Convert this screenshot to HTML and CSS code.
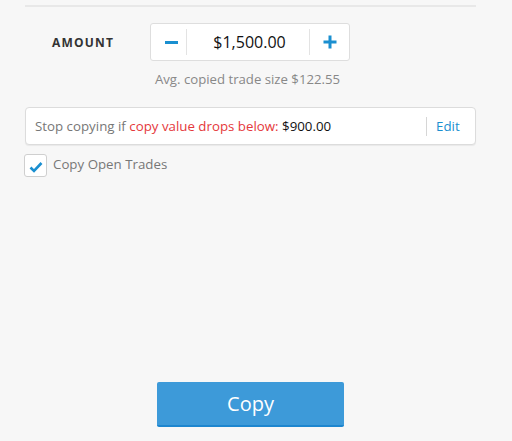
FILE: index.html
```html
<!DOCTYPE html>
<html>
<head>
<meta charset="utf-8">
<link rel="stylesheet" href="styles.css">
</head>
<body>
<div class="panel">
  <div class="divider"></div>
  <div class="amount-row">
    <div class="amount-label">AMOUNT</div>
    <div class="amount-col">
      <div class="stepper">
        <div class="step-btn minus"><span class="minus-bar"></span></div>
        <div class="step-value">$1,500.00</div>
        <div class="step-btn plus">
          <svg width="14" height="14" viewBox="0 0 14 14"><path d="M7 0.5V13.5M0.5 7H13.5" stroke="#1a8fd0" stroke-width="3"/></svg>
        </div>
      </div>
      <div class="avg">Avg. copied trade size $122.55</div>
    </div>
  </div>
  <div class="stop-box">
    <div class="stop-text"><span class="muted">Stop copying if </span><span class="red">copy value drops below: </span><span class="dark">$900.00</span></div>
    <div class="edit">Edit</div>
  </div>
  <label class="check-row">
    <span class="checkbox">
      <svg width="14" height="12" viewBox="0 0 14 12"><path d="M1.5 6.5L5 10L12.5 2" fill="none" stroke="#1a8fd0" stroke-width="2.6"/></svg>
    </span>
    <span class="check-text">Copy Open Trades</span>
  </label>
  <div class="btn-wrap">
    <button class="copy-btn">Copy</button>
  </div>
</div>
</body>
</html>
```
FILE: styles.css
```css
html, body {
  margin: 0;
  padding: 0;
  background: #f7f7f7;
  font-family: "Open Sans", "Liberation Sans", sans-serif;
}
.panel {
  width: 451px;
  margin-left: 25px;
}
.divider {
  height: 2px;
  margin-top: 5px;
  background: #e8e8e8;
}
.amount-row {
  display: flex;
  align-items: flex-start;
  margin-top: 16px;
}
.amount-label {
  width: 98px;
  padding-left: 27px;
  height: 37px;
  line-height: 40px;
  font-size: 12px;
  font-weight: 700;
  letter-spacing: 1.2px;
  color: #333;
}
.amount-col {
  width: 200px;
  display: flex;
  flex-direction: column;
  align-items: center;
}
.stepper {
  box-sizing: border-box;
  width: 200px;
  height: 38px;
  background: #fff;
  border: 1px solid #dedede;
  border-radius: 3px;
  display: flex;
  align-items: center;
}
.step-btn {
  height: 100%;
  display: flex;
  align-items: center;
}
.minus {
  width: 36px;
  justify-content: flex-start;
  padding-left: 14px;
  box-sizing: border-box;
  border-right: 1px solid #e3e3e3;
  height: 26px;
}
.minus-bar {
  width: 13px;
  height: 3px;
  background: #1a8fd0;
}
.step-value {
  flex: 1;
  text-align: center;
  font-size: 16px;
  color: #111;
  padding-left: 3px;
}
.plus {
  width: 39px;
  justify-content: center;
  border-left: 1px solid #e3e3e3;
  height: 26px;
}
.avg {
  margin-top: 10px;
  padding-right: 5px;
  font-size: 13.2px;
  line-height: 16px;
  color: #888;
  white-space: nowrap;
}
.stop-box {
  box-sizing: border-box;
  margin-top: 20px;
  height: 38px;
  background: #fff;
  border: 1px solid #dcdcdc;
  border-radius: 4px;
  box-shadow: 0 1px 1px rgba(0,0,0,0.06);
  display: flex;
  align-items: center;
  padding-left: 9px;
  font-size: 13.3px;
}
.stop-text {
  flex: 1;
}
.muted { color: #777; }
.red { color: #e5383b; }
.dark { color: #111; }
.edit {
  width: 49px;
  box-sizing: border-box;
  border-left: 1px solid #d6d6d6;
  padding-left: 9px;
  line-height: 19px;
  color: #1a8fd0;
}
.check-row {
  display: flex;
  align-items: center;
  margin-top: 9px;
  margin-left: -1px;
}
.checkbox {
  box-sizing: border-box;
  width: 23px;
  height: 23px;
  background: #fff;
  border: 1px solid #cfcfcf;
  border-radius: 3px;
  display: flex;
  align-items: center;
  justify-content: center;
  padding-top: 2px;
}
.check-text {
  margin-left: 6px;
  margin-top: -4px;
  font-size: 13.3px;
  color: #777;
}
.btn-wrap {
  display: flex;
  justify-content: center;
  margin-top: 205px;
}
.copy-btn {
  width: 187px;
  height: 45px;
  border: none;
  border-bottom: 2px solid #1d86cf;
  border-radius: 2px;
  background: #3d9ad9;
  color: #fff;
  font-family: "Open Sans", "Liberation Sans", sans-serif;
  font-size: 20px;
  padding: 0;
}
```
